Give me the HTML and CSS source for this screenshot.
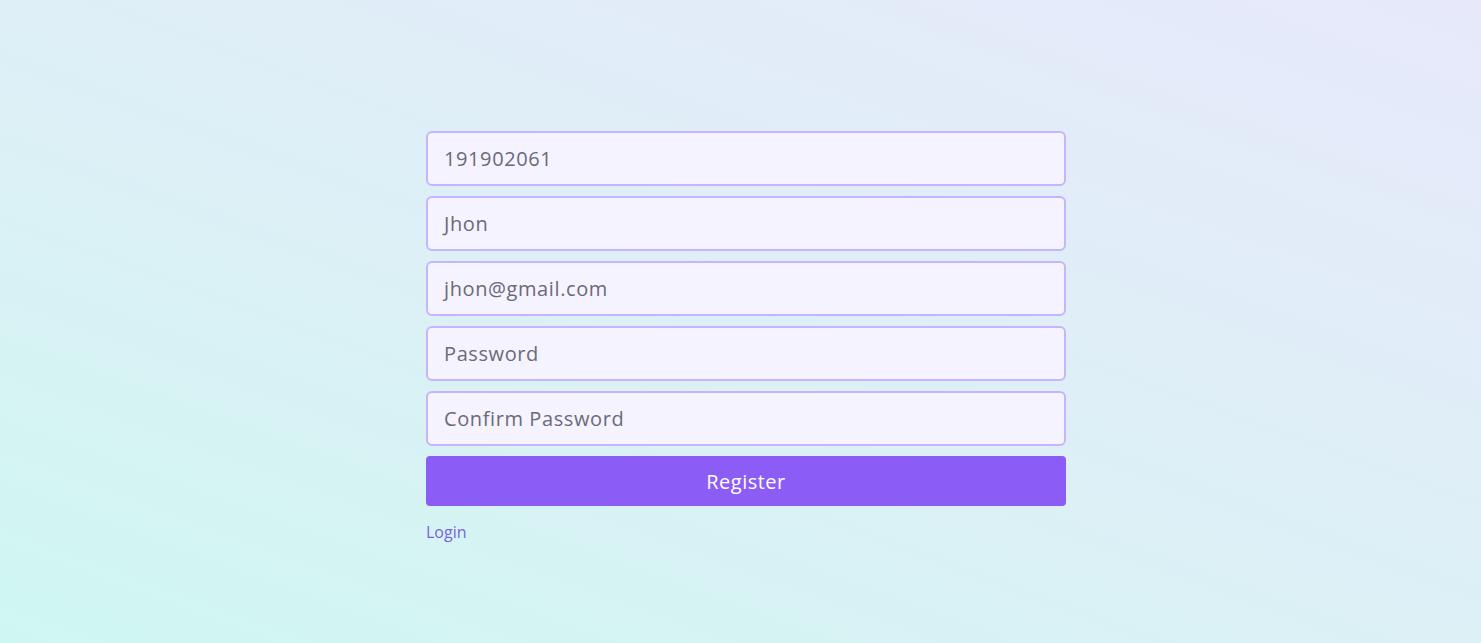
FILE: index.html
```html
<!DOCTYPE html>
<html lang="en">
<head>
<meta charset="utf-8">
<title>Register</title>
<link rel="stylesheet" href="styles.css">
</head>
<body>
<main class="page">
  <form class="form">
    <div class="field">191902061</div>
    <div class="field">Jhon</div>
    <div class="field">jhon@gmail.com</div>
    <div class="field">Password</div>
    <div class="field">Confirm Password</div>
    <div class="button">Register</div>
    <a class="link" href="#">Login</a>
  </form>
</main>
</body>
</html>
```
FILE: styles.css
```css
html, body {
  margin: 0;
  height: 100%;
}
body {
  background: linear-gradient(20deg, #cff7f1 0%, #dcf0f6 45%, #e7e9fb 100%);
  font-family: "Open Sans", "Noto Sans", sans-serif;
}
.page {
  display: flex;
  justify-content: center;
  padding-top: 131px;
  padding-left: 11px;
}
.form {
  width: 640px;
  display: flex;
  flex-direction: column;
  gap: 10px;
}
.field {
  box-sizing: border-box;
  height: 55px;
  border: 2px solid #c4b5fd;
  border-radius: 6px;
  background: #f5f3ff;
  padding: 0 16px;
  display: flex;
  align-items: center;
  font-size: 20px;
  letter-spacing: 0.6px;
  color: #6b6a78;
}
.button {
  height: 50px;
  border-radius: 4px;
  background: #8b5cf6;
  color: #fff;
  font-size: 20px;
  letter-spacing: 0.5px;
  display: flex;
  align-items: center;
  justify-content: center;
}
.link {
  margin-top: 5px;
  font-size: 16px;
  color: #7b62dc;
  text-decoration: none;
  align-self: flex-start;
}
```
